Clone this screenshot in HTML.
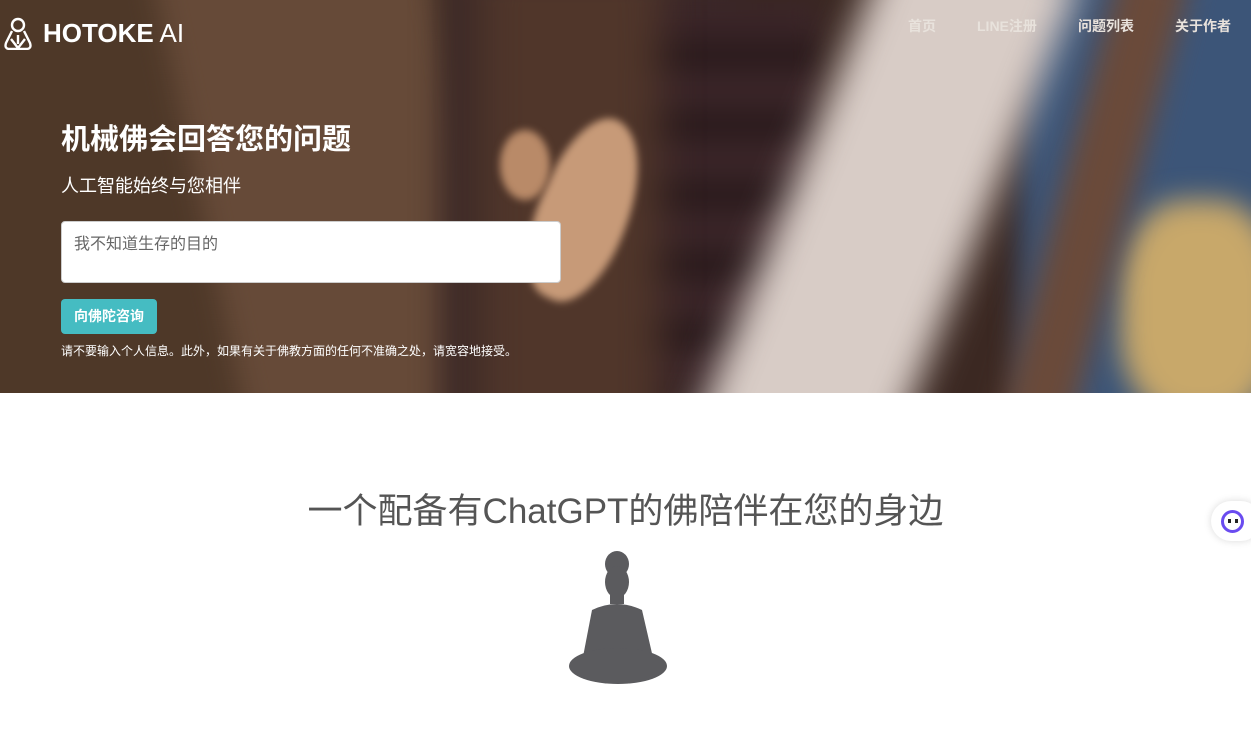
<!DOCTYPE html>
<html><head><meta charset="utf-8"><style>
*{margin:0;padding:0;box-sizing:border-box}
body{width:1251px;height:729px;overflow:hidden;background:#fff;font-family:"Liberation Sans","Noto Sans CJK SC",sans-serif}
.hero{position:relative;width:1251px;height:393px;overflow:hidden;background:#3b2822}
.bg{position:absolute;filter:blur(14px)}
.nav a{position:absolute;top:16px;color:#e8e2dc;font-size:14px;font-weight:bold;text-decoration:none}
</style></head><body>
<div class="hero">
<div class="bg" style="left:-40px;top:-40px;width:560px;height:480px;background:#4e3828"></div>
<div class="bg" style="left:200px;top:-40px;width:280px;height:480px;background:#664a38;transform:skewX(12deg)"></div>
<div class="bg" style="left:440px;top:-40px;width:300px;height:480px;background:#3d2a28"></div>
<div class="bg" style="left:560px;top:0;width:260px;height:400px;background:repeating-linear-gradient(#3a2528 0 40px,#2a1a1c 40px 70px)"></div>
<div class="bg" style="left:480px;top:-40px;width:180px;height:480px;background:#50362a;filter:blur(20px)"></div>
<div style="position:absolute;left:540px;top:115px;width:90px;height:190px;background:#c79a78;border-radius:40% 60% 40% 50%;filter:blur(4px);transform:rotate(25deg)"></div>
<div style="position:absolute;left:500px;top:130px;width:50px;height:70px;background:#b98a68;border-radius:50%;filter:blur(4px)"></div>
<div class="bg" style="left:1020px;top:-40px;width:280px;height:480px;background:#3c5578"></div>
<div class="bg" style="left:790px;top:-80px;width:190px;height:580px;background:#d8ccc6;transform:rotate(22deg);filter:blur(18px)"></div>
<div class="bg" style="left:1120px;top:200px;width:160px;height:220px;background:#c8a86a;border-radius:40%"></div>
<div class="bg" style="left:1060px;top:-40px;width:70px;height:480px;background:#6a4a3a;transform:rotate(15deg)"></div>
<svg style="position:absolute;left:2px;top:17px" width="32" height="33" viewBox="0 0 32 33" fill="none" stroke="#fff" stroke-width="2.4"><circle cx="16" cy="8" r="6"/><path d="M10 14 L4 26 Q2 32 8 32 L24 32 Q30 32 28 26 L22 14 M9 22 L16 31 L23 22 M16 18 V27"/></svg>
<div style="position:absolute;left:43px;top:17px;color:#fff;font-size:26px;line-height:32px"><b>HOTOKE</b> AI</div>
<div class="nav"><a style="left:908px">首页</a><a style="left:977px">LINE注册</a><a style="left:1078px">问题列表</a><a style="left:1175px">关于作者</a></div>
<div style="position:absolute;left:61px;top:116px;color:#fff;font-size:29px;font-weight:bold">机械佛会回答您的问题</div>
<div style="position:absolute;left:61px;top:172px;color:#fff;font-size:18px">人工智能始终与您相伴</div>
<div style="position:absolute;left:61px;top:221px;width:500px;height:62px;background:#fff;border:1px solid #ccc;border-radius:4px;padding:8px 12px;color:#666;font-size:16px">我不知道生存的目的</div>
<div style="position:absolute;left:61px;top:299px;width:96px;height:35px;background:#45bcc2;border-radius:4px;color:#fff;font-size:14px;font-weight:bold;line-height:35px;text-align:center">向佛陀咨询</div>
<div style="position:absolute;left:61px;top:342px;color:#fff;font-size:12px">请不要输入个人信息。此外，如果有关于佛教方面的任何不准确之处，请宽容地接受。</div>
</div>
<div style="position:absolute;left:0;width:1251px;top:483px;text-align:center;font-size:35px;color:#555">一个配备有ChatGPT的佛陪伴在您的身边</div>
<svg style="position:absolute;left:566px;top:550px" width="104" height="136" viewBox="0 0 104 136">
<g fill="#5b5b5e"><ellipse cx="51" cy="14" rx="12" ry="13"/><ellipse cx="51" cy="32" rx="12" ry="16"/><rect x="44" y="44" width="14" height="10"/><path d="M26 60 Q51 48 76 60 L88 112 L16 112 Z"/><ellipse cx="52" cy="116" rx="49" ry="18"/></g></svg>
<div style="position:absolute;left:1211px;top:501px;width:50px;height:40px;background:#fff;border-radius:20px;box-shadow:0 0 8px rgba(0,0,0,.15)"></div>
<div style="position:absolute;left:1221px;top:510px;width:23px;height:23px;border-radius:50%;border:3px solid #6a4cf0"></div>
<div style="position:absolute;left:1228px;top:519px;width:3px;height:4px;background:#222"></div>
<div style="position:absolute;left:1235px;top:519px;width:3px;height:4px;background:#222"></div>
</body></html>
